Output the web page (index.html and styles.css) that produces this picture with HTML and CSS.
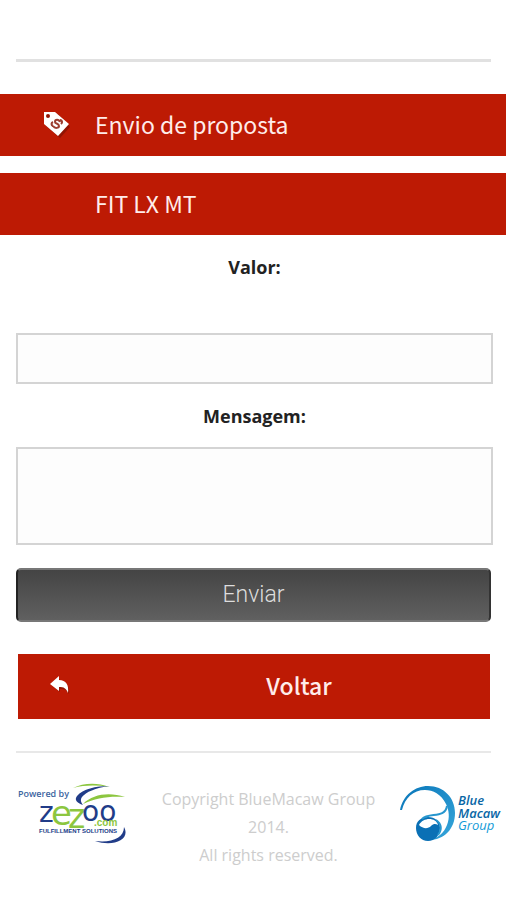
FILE: index.html
```html
<!DOCTYPE html>
<html lang="pt-BR">
    <head>
        <meta charset="UTF-8">
        <meta name="viewport" content="width=device-width, initial-scale=1">
        <title>Envio de proposta</title>
        <link rel="stylesheet" href="styles.css">
    </head>
    <body>
        <hr class="linha linha-topo">

        <h1 class="barra">
            <svg class="icone-tag" viewBox="0 0 28 28" aria-hidden="true">
                <path class="sombra" d="M3 4l12 0 12 13-10 11L3 16z"/>
                <path fill="#fff" fill-rule="evenodd" d="M1 2h11l14 12-11 12L1 14zM5 4a2 2 0 1 0 0 4 2 2 0 0 0 0-4z"/>
                <path class="cifrao" d="M17 12c-1-3-5-3-5 0 0 2 4 1 4 4 0 2-4 3-6 0M17 10c2 0 3 2 1 4M10 12c-2 1-2 3 0 4"/>
            </svg>
            <span>Envio de proposta</span>
        </h1>
        <h2 class="barra barra-modelo">FIT LX MT</h2>

        <form class="formulario">
            <label for="valor">Valor:</label>
            <input class="campo valor" type="text" id="valor" name="valor">
            <label for="mensagem">Mensagem:</label>
            <textarea class="campo mensagem" id="mensagem" name="mensagem"></textarea>
            <button class="enviar" type="submit">Enviar</button>
        </form>

        <a class="voltar" href="#">
            <svg class="icone-voltar" viewBox="0 0 20 18" aria-hidden="true">
                <path class="sombra" d="M2 9l8-6v4c7 0 10 4 9 11-2-4-4-5-9-5v3z"/>
                <path fill="#fff" d="M0 8l9-8v4c7 0 10 5 9 13-2-5-4-6-9-6v4z"/>
            </svg>
            <span>Voltar</span>
        </a>

        <hr class="linha linha-rodape">

        <footer class="rodape">
            <svg class="logo-zezoo" viewBox="0 0 112 64" role="img" aria-label="Powered by zezoo.com">
                <g fill="#8cc63f">
                    <path d="M56 5C66 0 80-1 92 4 80 2 68 2 56 5z"/>
                    <path d="M66 21C76 11 92 9 108 14 91 13 79 15 66 21z"/>
                </g>
                <g fill="#213c88">
                    <path d="M93 3C78 5 69 9 65 14c-2 3-1 5 1 8-6-2-9-5-6-9C66 6 78 3 93 3z"/>
                    <path d="M107 44c7 13-11 20-29 14 17 2 29-3 29-14z"/>
                </g>
                <text class="powered" x="1" y="14">Powered by</text>
                <g class="zezoo">
                    <text x="22" y="39">z</text>
                    <text class="verde letra-e" x="34" y="42">e</text>
                    <text class="verde letra-z" x="51" y="45">z</text>
                    <text x="65" y="38">oo</text>
                </g>
                <text class="com verde" x="77" y="43">.com</text>
                <text class="slogan" x="22" y="50">FULFILLMENT SOLUTIONS</text>
            </svg>

            <p class="copyright">Copyright BlueMacaw Group 2014.<br>All rights reserved.</p>

            <svg class="logo-macaw" viewBox="0 0 102 60" role="img" aria-label="Blue Macaw Group">
                <defs>
                    <linearGradient id="azul" x1="0" y1="0" x2="1" y2="1">
                        <stop offset="0" stop-color="#0875b8"/>
                        <stop offset="1" stop-color="#37a6db"/>
                    </linearGradient>
                </defs>
                <path fill="url(#azul)" d="M0 27C3 12 15 3 28 3c16 0 27 12 27 27 0 16-11 27-26 27 9-2 15-7 18-15 3-7 2-15-1-21C41 11 33 7 25 7 13 7 5 15 2 27z"/>
                <path fill="#0a70b5" fill-rule="evenodd" d="M16 45c0-7 5-11 12-11s12 4 12 11-5 13-12 13-12-6-12-13zM19 42c4 4 9 4 12 1 3-3 5-2 7-1-2-8-15-8-19 0z"/>
                <path class="asa" d="M22 36c7-7 23 0 25-13M38 52c4-5 4-11-2-15"/>
                <g class="macaw">
                    <text x="58" y="22">Blue</text>
                    <text x="58" y="35">Macaw</text>
                    <text class="group" x="58" y="47">Group</text>
                </g>
            </svg>
        </footer>
    </body>
</html>
```
FILE: styles.css
```css
* {
    box-sizing: border-box;
}

body {
    margin: 0;
    background: #fff;
    font-family: "Open Sans", sans-serif;
    color: #222;
}

.linha {
    height: 3px;
    margin: 0 15px 0 16px;
    border: 0;
    background: #e1e1e1;
}

.linha-topo {
    margin-top: 59px;
    margin-bottom: 32px;
}

.linha-rodape {
    height: 2px;
    background: #e8e8e8;
}

/* barras vermelhas */
.barra {
    display: flex;
    align-items: center;
    gap: 24px;
    height: 62px;
    margin: 0 0 17px;
    padding: 0 0 2px 43px;
    background: #bd1a04;
    color: #ffecea;
    font-family: "Noto Sans CJK SC", sans-serif;
    font-size: 23px;
    font-weight: 400;
    line-height: 32px;
}

.barra-modelo {
    margin-bottom: 16px;
    padding-left: 95px;
}

.icone-tag {
    width: 28px;
    height: 28px;
}

.sombra {
    fill: #741003;
    opacity: 0.6;
}

.cifrao {
    fill: none;
    stroke: #9b3e31;
    stroke-width: 2;
}

.formulario {
    display: flex;
    flex-direction: column;
    margin: 0 13px 32px 16px;
}

.formulario label {
    font-size: 18px;
    font-weight: 700;
    line-height: 32px;
    text-align: center;
}

.campo {
    width: 100%;
    padding: 8px;
    border: 2px solid #d4d4d4;
    background: #fdfdfd;
    font-family: inherit;
    font-size: 18px;
}

.valor {
    height: 51px;
    margin: 50px 0 16px;
}

.mensagem {
    height: 98px;
    margin: 15px 0 23px;
    resize: none;
}

.enviar {
    height: 54px;
    margin-right: 2px;
    padding-bottom: 3px;
    border: 2px solid #777;
    border-left-color: #222;
    border-right-color: #333;
    border-radius: 5px;
    background: linear-gradient(#444, #606060);
    color: #ddd;
    font-family: Roboto, sans-serif;
    font-size: 23px;
    font-weight: 300;
}

.voltar {
    display: flex;
    align-items: center;
    height: 65px;
    margin: 0 16px 32px 18px;
    padding: 0 32px 3px;
    background: #bd1a04;
    color: #ffecea;
    font-family: "Noto Sans CJK SC", sans-serif;
    font-size: 23px;
    font-weight: 500;
    text-decoration: none;
}

.voltar span {
    flex: 1;
    padding-left: 70px;
    text-align: center;
}

.icone-voltar {
    width: 20px;
    height: 18px;
}

/* rodape */
.rodape {
    display: flex;
    justify-content: space-between;
    margin-top: 30px;
    padding: 0 4px 0 17px;
}

.logo-zezoo {
    flex: none;
    width: 112px;
    height: 64px;
}

.copyright {
    width: 232px;
    margin: 2px 0 0;
    padding-left: 8px;
    color: #cdcdcd;
    font-size: 16px;
    line-height: 28px;
    text-align: center;
}

.logo-macaw {
    flex: none;
    width: 102px;
    height: 60px;
}

.logo-zezoo text {
    font-family: "Liberation Sans", sans-serif;
    fill: #213c88;
}

.logo-zezoo .verde {
    fill: #8cc63f;
}

.logo-zezoo .powered {
    fill: #3c64a0;
    font-family: "Open Sans", sans-serif;
    font-size: 9px;
    font-weight: 600;
}

.logo-zezoo .zezoo text {
    font-family: "DejaVu Sans", sans-serif;
    font-size: 28px;
}

.logo-zezoo .zezoo .letra-e {
    font-size: 34px;
}

.logo-zezoo .zezoo .letra-z {
    font-size: 33px;
}

.com {
    font-size: 10px;
    font-weight: bold;
}

.logo-zezoo .slogan {
    font-size: 6px;
    font-weight: bold;
}

.asa {
    fill: none;
    stroke: #2796ce;
    stroke-width: 2;
}

.macaw {
    fill: #0866a5;
    font-family: "Open Sans", sans-serif;
    font-size: 13px;
    font-style: italic;
    font-weight: 600;
}

.group {
    fill: #129bd7;
    font-weight: 400;
}
```
